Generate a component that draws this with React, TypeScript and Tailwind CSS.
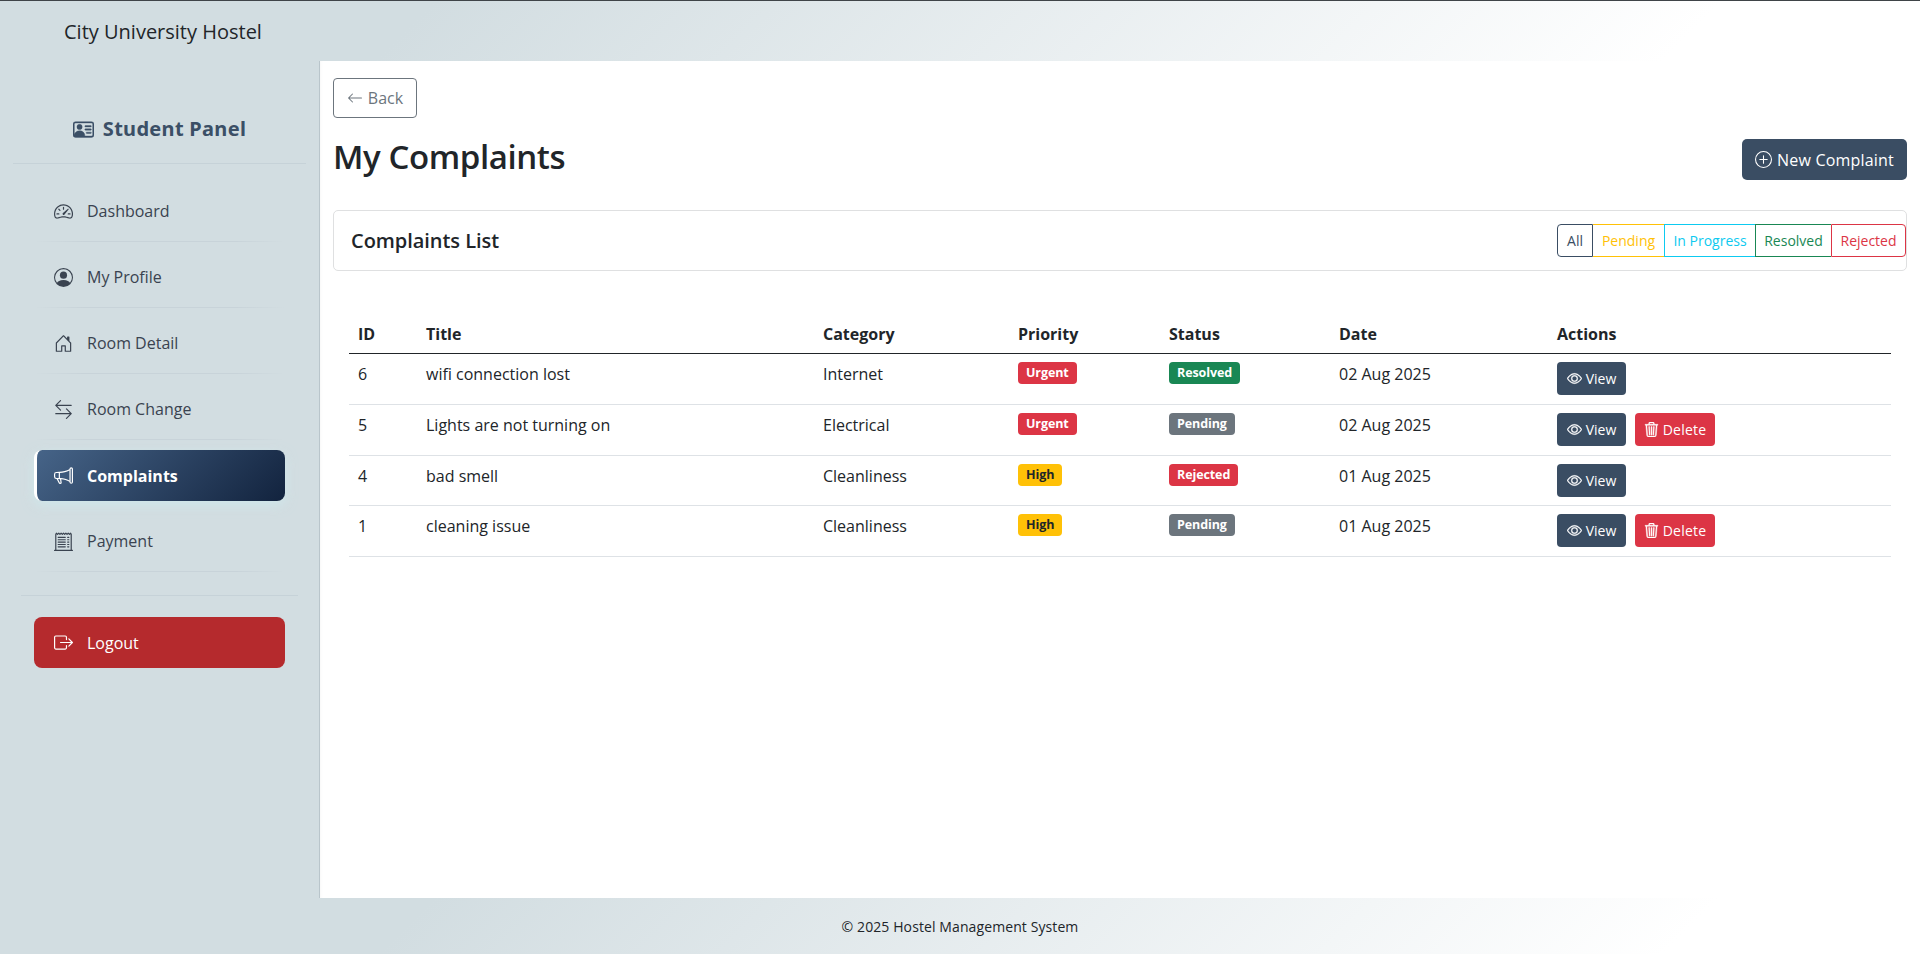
import { BsPersonVcard, BsSpeedometer2, BsPersonCircle, BsHouseDoor, BsArrowLeftRight, BsMegaphone, BsReceiptCutoff, BsBoxArrowRight, BsPlusCircle, BsEye, BsTrash3, BsArrowLeft } from "react-icons/bs";

const nav = [
  { label: "Dashboard", Icon: BsSpeedometer2 },
  { label: "My Profile", Icon: BsPersonCircle },
  { label: "Room Detail", Icon: BsHouseDoor },
  { label: "Room Change", Icon: BsArrowLeftRight },
  { label: "Complaints", Icon: BsMegaphone, active: true },
  { label: "Payment", Icon: BsReceiptCutoff },
];

const rows = [
  { id: 6, title: "wifi connection lost", cat: "Internet", pri: "Urgent", st: "Resolved", date: "02 Aug 2025", del: false, h: "h-[51px]" },
  { id: 5, title: "Lights are not turning on", cat: "Electrical", pri: "Urgent", st: "Pending", date: "02 Aug 2025", del: true, h: "h-[51px]" },
  { id: 4, title: "bad smell", cat: "Cleanliness", pri: "High", st: "Rejected", date: "01 Aug 2025", del: false, h: "h-[50px]" },
  { id: 1, title: "cleaning issue", cat: "Cleanliness", pri: "High", st: "Pending", date: "01 Aug 2025", del: true, h: "h-[51px]" },
];

const badge: Record<string, string> = {
  Urgent: "bg-[#dc3545] text-white",
  High: "bg-[#ffc107] text-[#212529]",
  Resolved: "bg-[#198754] text-white",
  Pending: "bg-[#6c757d] text-white",
  Rejected: "bg-[#dc3545] text-white",
};

function Badge({ t }: { t: string }) {
  return <span className={`block w-fit rounded-[4px] px-[8px] h-[22px] leading-[21px] text-[12.5px] font-bold tracking-[-0.1px] ${badge[t]}`}>{t}</span>;
}

const band = "bg-[linear-gradient(135deg,#d2dde1_0%,#d2dde1_22%,#ffffff_87%)]";

export default function App() {
  return (
    <div className="flex flex-col h-[954px] overflow-hidden bg-white text-[#212529] [font-family:'Open_Sans',sans-serif]">
      <header className={`h-[61px] shrink-0 border-t border-[#3f4448] pl-[64px] pt-[2px] flex items-center text-[20px] ${band}`}>
        City University Hostel
      </header>
      <div className="flex flex-1 min-h-0">
        <aside className="w-[320px] shrink-0 bg-[#d2dde1] border-r border-[#b9c5cb] flex flex-col">
          <div className="h-[103px] mx-[13px] border-b border-[#c6d2d8] flex items-center justify-center gap-[9px] pt-[34px] text-[#3b4f66] font-bold text-[20px] tracking-[0.3px] [font-family:'Noto_Sans',sans-serif]">
            <BsPersonVcard className="w-[21px] h-[21px] stroke-[0.3]" />
            <span>Student Panel</span>
          </div>
          <nav className="flex flex-col pt-[12px] px-[34px]">
            {nav.map(({ label, Icon, active }) => (
              <div key={label} className={active ? "h-[51px] mt-[10px] mb-[5px] flex items-center gap-[14px] pl-[17px] rounded-[8px] border-l-[3px] border-white bg-[linear-gradient(135deg,#466488,#12233e)] text-white font-bold text-[16px] shadow-[0_4px_12px_rgba(205,238,242,0.6)]" : "h-[66px] pt-[4px] flex items-center gap-[14px] pl-[20px] text-[#3a4350] text-[16px] bg-[linear-gradient(90deg,transparent,#c8d3d9_20%,#c8d3d9_80%,transparent)] bg-no-repeat bg-bottom bg-[length:100%_1px]"}>
                <Icon className="w-[19px] h-[19px] shrink-0" />
                <span>{label}</span>
              </div>
            ))}
          </nav>
          <div className="mx-[21px] mt-[23px] border-t border-[#c6d2d8]" />
          <div className="mx-[34px] mt-[21px] h-[51px] rounded-[8px] bg-[#b52a2d] text-white flex items-center gap-[14px] pl-[20px] text-[16px]">
            <BsBoxArrowRight className="w-[19px] h-[19px]" />
            <span>Logout</span>
          </div>
        </aside>
        <main className="flex-1 bg-white pl-[13px] pr-[13px] pt-[17px] shadow-[inset_3px_0_3px_-2px_rgba(0,0,0,0.03)]">
          <button className="h-[40px] w-[84px] rounded-[4px] border border-[#6c757d] text-[#6c757d] text-[16px] flex items-center justify-center gap-[5px]">
            <BsArrowLeft className="w-[16px] h-[16px]" />Back
          </button>
          <div className="flex items-start justify-between mt-[21px]">
            <h1 className="text-[33px] -mt-[2px] font-semibold tracking-[-0.4px] leading-[40px]">My Complaints</h1>
            <button className="h-[41px] w-[165px] rounded-[5px] bg-[#3a4d63] text-white text-[16px] tracking-[0.2px] flex items-center justify-center gap-[5px]">
              <BsPlusCircle className="w-[17px] h-[17px]" />New Complaint
            </button>
          </div>
          <section className="mt-[30px]">
            <div className="h-[61px] rounded-[5px] border border-[#dfe0e1] flex items-center justify-between pl-[17px]">
              <h2 className="text-[20px] font-semibold tracking-[-0.05px]">Complaints List</h2>
              <div className="flex text-[14px] h-[33px] leading-[31px]">
                <span className="border border-[#3a4d63] text-[#3a4d63] rounded-l-[4px] w-[36px] text-center">All</span>
                <span className="border-y border-[#ffc107] text-[#ffc107] w-[71px] text-center">Pending</span>
                <span className="border border-r-0 border-[#0dcaf0] text-[#0dcaf0] w-[91px] text-center">In Progress</span>
                <span className="border border-r-0 border-[#198754] text-[#198754] w-[76px] text-center">Resolved</span>
                <span className="border border-[#dc3545] text-[#dc3545] rounded-r-[4px] w-[75px] text-center">Rejected</span>
              </div>
            </div>
            <div className="px-[16px] pt-[44px]">
              <table className="w-full border-collapse text-[16px]">
                <thead>
                  <tr className="h-[38px] border-b border-[#212529] text-left">
                    <th className="font-bold w-[68px] pl-[9px]">ID</th>
                    <th className="font-bold w-[397px] pl-[9px]">Title</th>
                    <th className="font-bold w-[195px] pl-[9px]">Category</th>
                    <th className="font-bold w-[151px] pl-[9px]">Priority</th>
                    <th className="font-bold w-[170px] pl-[9px]">Status</th>
                    <th className="font-bold w-[218px] pl-[9px]">Date</th>
                    <th className="font-bold pl-[9px]">Actions</th>
                  </tr>
                </thead>
                <tbody>
                  {rows.map((r) => (
                    <tr key={r.id} className={`${r.h} border-b border-[#dee2e6] align-top`}>
                      <td className="pl-[9px] pt-[8px]">{r.id}</td>
                      <td className="pl-[9px] pt-[8px]">{r.title}</td>
                      <td className="pl-[9px] pt-[8px]">{r.cat}</td>
                      <td className="pl-[9px] pt-[8px]"><Badge t={r.pri} /></td>
                      <td className="pl-[9px] pt-[8px]"><Badge t={r.st} /></td>
                      <td className="pl-[9px] pt-[8px]">{r.date}</td>
                      <td className="pl-[9px] pt-[8px]">
                        <div className="flex gap-[9px] text-[14px] text-white">
                          <span className="h-[33px] w-[69px] rounded-[4px] bg-[#3a4d63] flex items-center justify-center gap-[4px]"><BsEye className="w-[15px] h-[15px] stroke-[0.3]" />View</span>
                          {r.del && <span className="h-[33px] w-[80px] rounded-[4px] bg-[#dc3545] flex items-center justify-center gap-[4px] tracking-[0.2px]"><BsTrash3 className="w-[15px] h-[15px] stroke-[0.5]" />Delete</span>}
                        </div>
                      </td>
                    </tr>
                  ))}
                </tbody>
              </table>
            </div>
          </section>
        </main>
      </div>
      <footer className={`h-[56px] shrink-0 flex items-center justify-center text-[14px] tracking-[0.1px] ${band}`}>© 2025 Hostel Management System</footer>
    </div>
  );
}
